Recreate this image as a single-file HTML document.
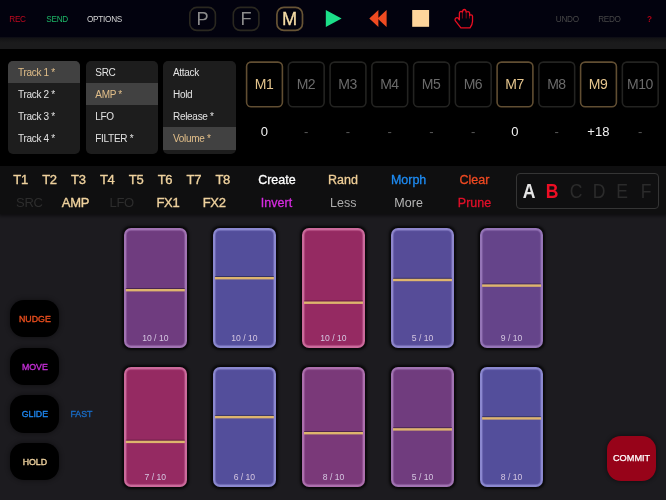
<!DOCTYPE html>
<html><head><meta charset="utf-8">
<style>
html,body{margin:0;padding:0;background:#1c1b1f;}
body{width:666px;height:500px;position:relative;overflow:hidden;font-family:"Liberation Sans",sans-serif;}
.abs{position:absolute;}
.c{position:absolute;transform:translate(-50%,-50%);white-space:nowrap;line-height:1;}
#top{left:0;top:0;width:666px;height:37px;background:#03030f;border-bottom:1px solid #0f0f16;}
#strip{left:0;top:38px;width:666px;height:11px;background:linear-gradient(#141416,#1c1c1d 45%);}
#black{left:0;top:49px;width:666px;height:117px;background:#000;}
#bar{left:0;top:166px;width:666px;height:47.5px;background:#101011;box-shadow:0 1px 3px 1px rgba(0,0,0,.5);}
.tb{font-size:8.2px;letter-spacing:-0.25px;}
.pf{font-size:18.2px;color:#8c8c8c;}
.list{position:absolute;top:61px;width:72px;height:92.6px;background:#1e1e1e;border-radius:5px;overflow:hidden;}
.list div{height:22.15px;line-height:24.8px;font-size:10px;color:#e4e4e4;padding-left:10px;letter-spacing:-0.3px;}
.l2 div{padding-left:9.3px;}
.list div.s{background:#424242;color:#e2bf8a;}
.mt{font-size:14px;color:#6c6c6c;letter-spacing:-0.5px;}
.mt.on{color:#e6c68e;}
.v{font-size:13px;color:#5a5a5a;}
.v.w{color:#f2f2f2;}
.t{font-size:13px;color:#f0d39f;-webkit-text-stroke:0.35px #f0d39f;letter-spacing:-0.3px;}
.a{font-size:12.5px;-webkit-text-stroke:0.3px currentColor;}
.ab{font-size:19.5px;color:#2c2c2c;transform:translate(-50%,-50%) scaleX(.9);}
.card{position:absolute;width:59.6px;height:115.9px;border:2px solid;border-radius:7px;box-shadow:0 0 2.5px 1.2px rgba(0,0,0,.75),inset 0 0 1px .4px currentColor;}
.card span{position:absolute;left:0;right:0;bottom:3.8px;text-align:center;font-size:8.6px;line-height:1;color:#d6c8e2;}
.sb{position:absolute;left:10.3px;width:49.2px;height:37.4px;background:#000;border-radius:14px;box-shadow:0 0 5px 1px rgba(0,0,0,.35);font-size:8.8px;-webkit-text-stroke:0.35px currentColor;text-align:center;line-height:38px;}
</style></head><body><div style="position:absolute;left:0;top:0;width:666px;height:500px;will-change:transform;opacity:0.999">
<div id="top" class="abs"></div>
<div id="strip" class="abs"></div>
<div id="black" class="abs"></div>
<div id="bar" class="abs"></div>

<!-- toolbar -->
<span class="c tb" style="left:17.5px;top:19.7px;color:#c20a20;">REC</span>
<span class="c tb" style="left:57.1px;top:19.7px;color:#1fb868;">SEND</span>
<span class="c tb" style="left:104.5px;top:19.7px;color:#d6d6d6;">OPTIONS</span>
<svg class="abs" style="left:180px;top:0" width="140" height="38" viewBox="180 0 140 38">
<rect x="189.8" y="7.4" width="25.6" height="23" rx="7" fill="none" stroke="#2b2921" stroke-width="1.6"/>
<rect x="233.3" y="7.4" width="25.6" height="23" rx="7" fill="none" stroke="#2b2921" stroke-width="1.6"/>
<rect x="276.9" y="7.4" width="25.6" height="23" rx="7" fill="none" stroke="#685536" stroke-width="1.7"/>
</svg>
<span class="c pf" style="left:202.6px;top:19.1px;">P</span>
<span class="c pf" style="left:246.1px;top:19.1px;">F</span>
<span class="c pf" style="left:289.7px;top:19.1px;color:#f5dca6;-webkit-text-stroke:0.3px #f5dca6;">M</span>
<svg class="abs" style="left:320px;top:0" width="160" height="38" viewBox="320 0 160 38">
<polygon points="325.8,10 325.8,27 341.6,18.5" fill="#1de08a"/>
<polygon points="378.4,10.1 378.4,26.9 369.3,18.5" fill="#f04c22"/>
<polygon points="386.6,10.1 386.6,26.9 377.5,18.5" fill="#f04c22"/>
<rect x="412.2" y="10" width="16.9" height="16.8" fill="#ffd69c"/>
</svg>
<svg class="abs" style="left:440px;top:0" width="50" height="38" viewBox="0 0 658 500">
<path d="M295 165V245M345 160V245M388 200V245" stroke="#7a0a16" stroke-width="14" fill="none"/>
<path d="M275 368L395 368Q428 320 428 280L428 215Q428 195 408 195Q395 195 390 205L390 170Q385 150 365 152Q350 152 345 160Q340 125 320 125Q300 125 295 160Q290 150 275 150Q255 152 255 175L255 262L238 238Q225 228 208 238Q192 250 200 272Z" stroke="#ea0f22" stroke-width="17" fill="none" stroke-linejoin="round"/>
</svg>
<span class="c" style="left:567.3px;top:19.7px;font-size:8.2px;letter-spacing:-0.3px;color:#484848;">UNDO</span>
<span class="c" style="left:609.4px;top:19.7px;font-size:8.2px;letter-spacing:-0.3px;color:#484848;">REDO</span>
<span class="c" style="left:649.5px;top:19.7px;font-size:8.2px;color:#b00016;font-weight:bold;">?</span>

<!-- lists -->
<div class="list" style="left:8px;"><div class="s">Track 1 *</div><div>Track 2 *</div><div>Track 3 *</div><div>Track 4 *</div></div>
<div class="list l2" style="left:86px;"><div>SRC</div><div class="s">AMP *</div><div>LFO</div><div>FILTER *</div></div>
<div class="list" style="left:163px;width:73px;"><div>Attack</div><div>Hold</div><div>Release *</div><div class="s">Volume *</div></div>

<!-- M buttons -->
<svg class="abs" style="left:240px;top:56px" width="426" height="58" viewBox="240 56 426 58">
<rect x="246.60" y="62.1" width="35.8" height="44.7" rx="4.5" fill="none" stroke="#624f33" stroke-width="1.6"/>
<rect x="288.35" y="62.1" width="35.8" height="44.7" rx="4.5" fill="none" stroke="#242422" stroke-width="1.6"/>
<rect x="330.10" y="62.1" width="35.8" height="44.7" rx="4.5" fill="none" stroke="#242422" stroke-width="1.6"/>
<rect x="371.85" y="62.1" width="35.8" height="44.7" rx="4.5" fill="none" stroke="#242422" stroke-width="1.6"/>
<rect x="413.60" y="62.1" width="35.8" height="44.7" rx="4.5" fill="none" stroke="#242422" stroke-width="1.6"/>
<rect x="455.35" y="62.1" width="35.8" height="44.7" rx="4.5" fill="none" stroke="#242422" stroke-width="1.6"/>
<rect x="497.10" y="62.1" width="35.8" height="44.7" rx="4.5" fill="none" stroke="#624f33" stroke-width="1.6"/>
<rect x="538.85" y="62.1" width="35.8" height="44.7" rx="4.5" fill="none" stroke="#242422" stroke-width="1.6"/>
<rect x="580.60" y="62.1" width="35.8" height="44.7" rx="4.5" fill="none" stroke="#624f33" stroke-width="1.6"/>
<rect x="622.35" y="62.1" width="35.8" height="44.7" rx="4.5" fill="none" stroke="#242422" stroke-width="1.6"/>
</svg>
<span class="c mt on" style="left:264.1px;top:84.0px;">M1</span>
<span class="c mt" style="left:305.9px;top:84.0px;">M2</span>
<span class="c mt" style="left:347.6px;top:84.0px;">M3</span>
<span class="c mt" style="left:389.4px;top:84.0px;">M4</span>
<span class="c mt" style="left:431.1px;top:84.0px;">M5</span>
<span class="c mt" style="left:472.9px;top:84.0px;">M6</span>
<span class="c mt on" style="left:514.6px;top:84.0px;">M7</span>
<span class="c mt" style="left:556.4px;top:84.0px;">M8</span>
<span class="c mt on" style="left:598.1px;top:84.0px;">M9</span>
<span class="c mt" style="left:639.9px;top:84.0px;">M10</span>
<span class="c v w" style="left:264.4px;top:131.3px;">0</span>
<span class="c v" style="left:306.2px;top:131.3px;">-</span>
<span class="c v" style="left:347.9px;top:131.3px;">-</span>
<span class="c v" style="left:389.7px;top:131.3px;">-</span>
<span class="c v" style="left:431.4px;top:131.3px;">-</span>
<span class="c v" style="left:473.2px;top:131.3px;">-</span>
<span class="c v w" style="left:514.9px;top:131.3px;">0</span>
<span class="c v" style="left:556.7px;top:131.3px;">-</span>
<span class="c v w" style="left:598.4px;top:131.3px;">+18</span>
<span class="c v" style="left:640.2px;top:131.3px;">-</span>

<!-- bar -->
<span class="c t" style="left:20.6px;top:179.2px;">T1</span>
<span class="c t" style="left:49.5px;top:179.2px;">T2</span>
<span class="c t" style="left:78.3px;top:179.2px;">T3</span>
<span class="c t" style="left:107.2px;top:179.2px;">T4</span>
<span class="c t" style="left:136.1px;top:179.2px;">T5</span>
<span class="c t" style="left:165px;top:179.2px;">T6</span>
<span class="c t" style="left:193.8px;top:179.2px;">T7</span>
<span class="c t" style="left:222.7px;top:179.2px;">T8</span>
<span class="c t" style="left:29.3px;top:202.3px;color:#2e2e2e;-webkit-text-stroke:0;">SRC</span>
<span class="c t" style="left:75.5px;top:202.3px;">AMP</span>
<span class="c t" style="left:121.7px;top:202.3px;color:#2e2e2e;-webkit-text-stroke:0;">LFO</span>
<span class="c t" style="left:167.9px;top:202.3px;">FX1</span>
<span class="c t" style="left:214.2px;top:202.3px;">FX2</span>

<span class="c a" style="left:276.9px;top:179.8px;color:#fff;">Create</span>
<span class="c a" style="left:343px;top:179.8px;color:#f0cf98;">Rand</span>
<span class="c a" style="left:408.6px;top:179.8px;color:#1f8df5;">Morph</span>
<span class="c a" style="left:474.5px;top:179.8px;color:#f04a23;">Clear</span>
<span class="c a" style="left:276.5px;top:202.8px;color:#d82ce2;">Invert</span>
<span class="c a" style="left:343.2px;top:202.8px;color:#adadad;-webkit-text-stroke:0;">Less</span>
<span class="c a" style="left:408.6px;top:202.8px;color:#b8b8b8;-webkit-text-stroke:0;">More</span>
<span class="c a" style="left:474.5px;top:202.8px;color:#e1102a;">Prune</span>

<div class="abs" style="left:516px;top:172.8px;width:141px;height:34.3px;border:1px solid #363636;border-radius:4px;background:#101011;"></div>
<span class="c ab" style="left:529px;top:192.3px;color:#e6e6e6;font-weight:bold;">A</span>
<span class="c ab" style="left:552.4px;top:192.3px;color:#ee0f25;font-weight:bold;">B</span>
<span class="c ab" style="left:575.7px;top:192.3px;">C</span>
<span class="c ab" style="left:599px;top:192.3px;">D</span>
<span class="c ab" style="left:622.3px;top:192.3px;">E</span>
<span class="c ab" style="left:645.8px;top:192.3px;">F</span>

<!-- cards row 1 -->
<div class="card" style="left:123.5px;top:228.1px;background:#703d80;border-color:#a274b3;color:#a274b3;"><span>10 / 10</span></div>
<div class="card" style="left:212.6px;top:228.1px;background:#544f9c;border-color:#8c89d0;color:#8c89d0;"><span>10 / 10</span></div>
<div class="card" style="left:301.7px;top:228.1px;background:#962b63;border-color:#cc6b9c;color:#cc6b9c;"><span>10 / 10</span></div>
<div class="card" style="left:390.7px;top:228.1px;background:#574d99;border-color:#8f87cd;color:#8f87cd;"><span>5 / 10</span></div>
<div class="card" style="left:479.8px;top:228.1px;background:#66458b;border-color:#9676b8;color:#9676b8;"><span>9 / 10</span></div>
<!-- cards row 2 -->
<div class="card" style="left:123.5px;top:367.1px;background:#962b63;border-color:#cc6b9c;color:#cc6b9c;"><span>7 / 10</span></div>
<div class="card" style="left:212.6px;top:367.1px;background:#544f9c;border-color:#8c89d0;color:#8c89d0;"><span>6 / 10</span></div>
<div class="card" style="left:301.7px;top:367.1px;background:#7b3a7a;border-color:#ae70ae;color:#ae70ae;"><span>8 / 10</span></div>
<div class="card" style="left:390.7px;top:367.1px;background:#713d7f;border-color:#a274b3;color:#a274b3;"><span>5 / 10</span></div>
<div class="card" style="left:479.8px;top:367.1px;background:#544f9c;border-color:#8c89d0;color:#8c89d0;"><span>8 / 10</span></div>

<svg class="abs" style="left:0;top:222px" width="666" height="278" viewBox="0 222 666 278">
<rect x="125.8" y="288.00" width="59.0" height="1.2" fill="rgba(0,0,0,.35)"/><rect x="125.8" y="289.00" width="59.0" height="2.4" fill="#dfb66e"/>
<rect x="214.9" y="276.00" width="59.0" height="1.2" fill="rgba(0,0,0,.35)"/><rect x="214.9" y="277.00" width="59.0" height="2.4" fill="#dfb66e"/>
<rect x="304.0" y="300.50" width="59.0" height="1.2" fill="rgba(0,0,0,.35)"/><rect x="304.0" y="301.50" width="59.0" height="2.4" fill="#dfb66e"/>
<rect x="393.0" y="277.80" width="59.0" height="1.2" fill="rgba(0,0,0,.35)"/><rect x="393.0" y="278.80" width="59.0" height="2.4" fill="#dfb66e"/>
<rect x="482.1" y="283.40" width="59.0" height="1.2" fill="rgba(0,0,0,.35)"/><rect x="482.1" y="284.40" width="59.0" height="2.4" fill="#dfb66e"/>
<rect x="125.8" y="439.70" width="59.0" height="1.2" fill="rgba(0,0,0,.35)"/><rect x="125.8" y="440.70" width="59.0" height="2.4" fill="#dfb66e"/>
<rect x="214.9" y="414.95" width="59.0" height="1.2" fill="rgba(0,0,0,.35)"/><rect x="214.9" y="415.95" width="59.0" height="2.4" fill="#dfb66e"/>
<rect x="304.0" y="431.00" width="59.0" height="1.2" fill="rgba(0,0,0,.35)"/><rect x="304.0" y="432.00" width="59.0" height="2.4" fill="#dfb66e"/>
<rect x="393.0" y="427.20" width="59.0" height="1.2" fill="rgba(0,0,0,.35)"/><rect x="393.0" y="428.20" width="59.0" height="2.4" fill="#dfb66e"/>
<rect x="482.1" y="416.20" width="59.0" height="1.2" fill="rgba(0,0,0,.35)"/><rect x="482.1" y="417.20" width="59.0" height="2.4" fill="#dfb66e"/>
</svg>
<!-- side buttons -->
<div class="sb" style="top:299.9px;color:#ea4f1f;">NUDGE</div>
<div class="sb" style="top:347.6px;color:#c42fd6;">MOVE</div>
<div class="sb" style="top:395.2px;color:#1f86ee;">GLIDE</div>
<div class="sb" style="top:442.8px;color:#f0d3a0;">HOLD</div>
<span class="c" style="left:81.4px;top:414.2px;font-size:8.8px;-webkit-text-stroke:0.35px #1a6cc4;color:#1a6cc4;">FAST</span>
<div class="abs" style="left:606.8px;top:436px;width:49.6px;height:44.5px;background:#98041a;border-radius:14px;box-shadow:0 0 4px 1px rgba(0,0,0,.4);color:#fff;font-size:9.2px;-webkit-text-stroke:0.25px #fff;text-align:center;line-height:45px;">COMMIT</div>
</div></body></html>
